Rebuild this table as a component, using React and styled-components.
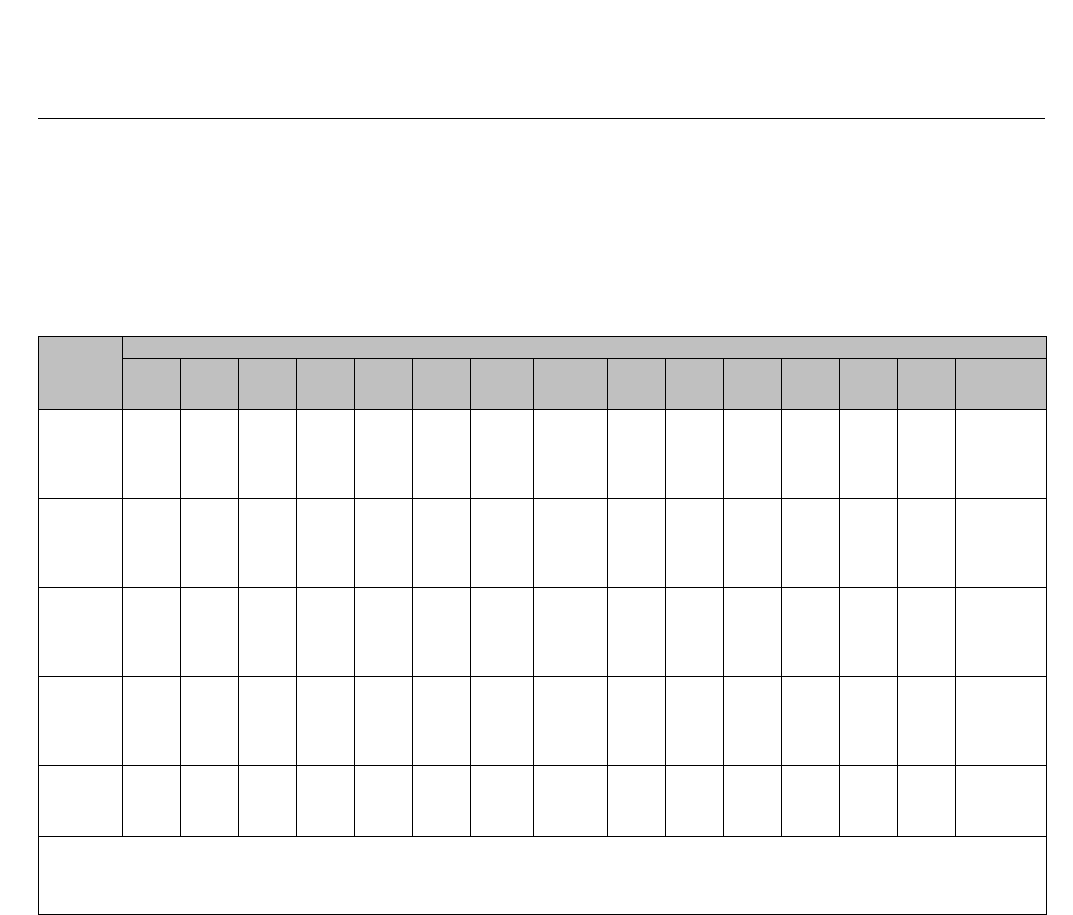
import styled, { createGlobalStyle } from 'styled-components';

const GlobalStyle = createGlobalStyle`
  html, body {
    margin: 0;
    padding: 0;
    background: #ffffff;
    font-family: "Liberation Sans", Arial, sans-serif;
  }
`

const Page = styled.div`
  padding: 118px 27px 0 38px;
  display: flex;
  flex-direction: column;
`
const Rule = styled.hr`
  margin: 0;
  width: 1007px;
  border: none;
  border-top: 1px solid #000;
`
const Sheet = styled.table`
  margin-top: 217px;
  width: 1008px;
  table-layout: fixed;
  border-collapse: collapse;
  border: 1px solid #000;
`
const Col = styled.col`
  width: ${p => p.$w}px;
`
const HeadCell = styled.th`
  background: #c0c0c0;
  border: 1px solid #000;
  padding: 0;
  height: ${p => p.$h}px;
`
const Cell = styled.td`
  border: 1px solid #000;
  padding: 0;
  height: ${p => p.$h}px;
`

const widths = [84, 58, 58, 58, 58, 58, 58, 63, 74, 58, 58, 58, 58, 58, 58, 91];
const rows = [88, 88, 88, 88, 70];

const App = () => (
  <>
    <GlobalStyle />
    <Page>
      <Rule />
      <Sheet>
        <colgroup>
          {widths.map((w, i) => <Col key={i} $w={w} />)}
        </colgroup>
        <thead>
          <tr>
            <HeadCell rowSpan={2} />
            <HeadCell colSpan={15} $h={21} />
          </tr>
          <tr>
            {widths.slice(1).map((w, i) => <HeadCell key={i} $h={50} />)}
          </tr>
        </thead>
        <tbody>
          {rows.map((h, r) => (
            <tr key={r}>
              {widths.map((w, i) => <Cell key={i} $h={h} />)}
            </tr>
          ))}
          <tr>
            <Cell colSpan={16} $h={77} />
          </tr>
        </tbody>
      </Sheet>
    </Page>
  </>
);

export default App;
